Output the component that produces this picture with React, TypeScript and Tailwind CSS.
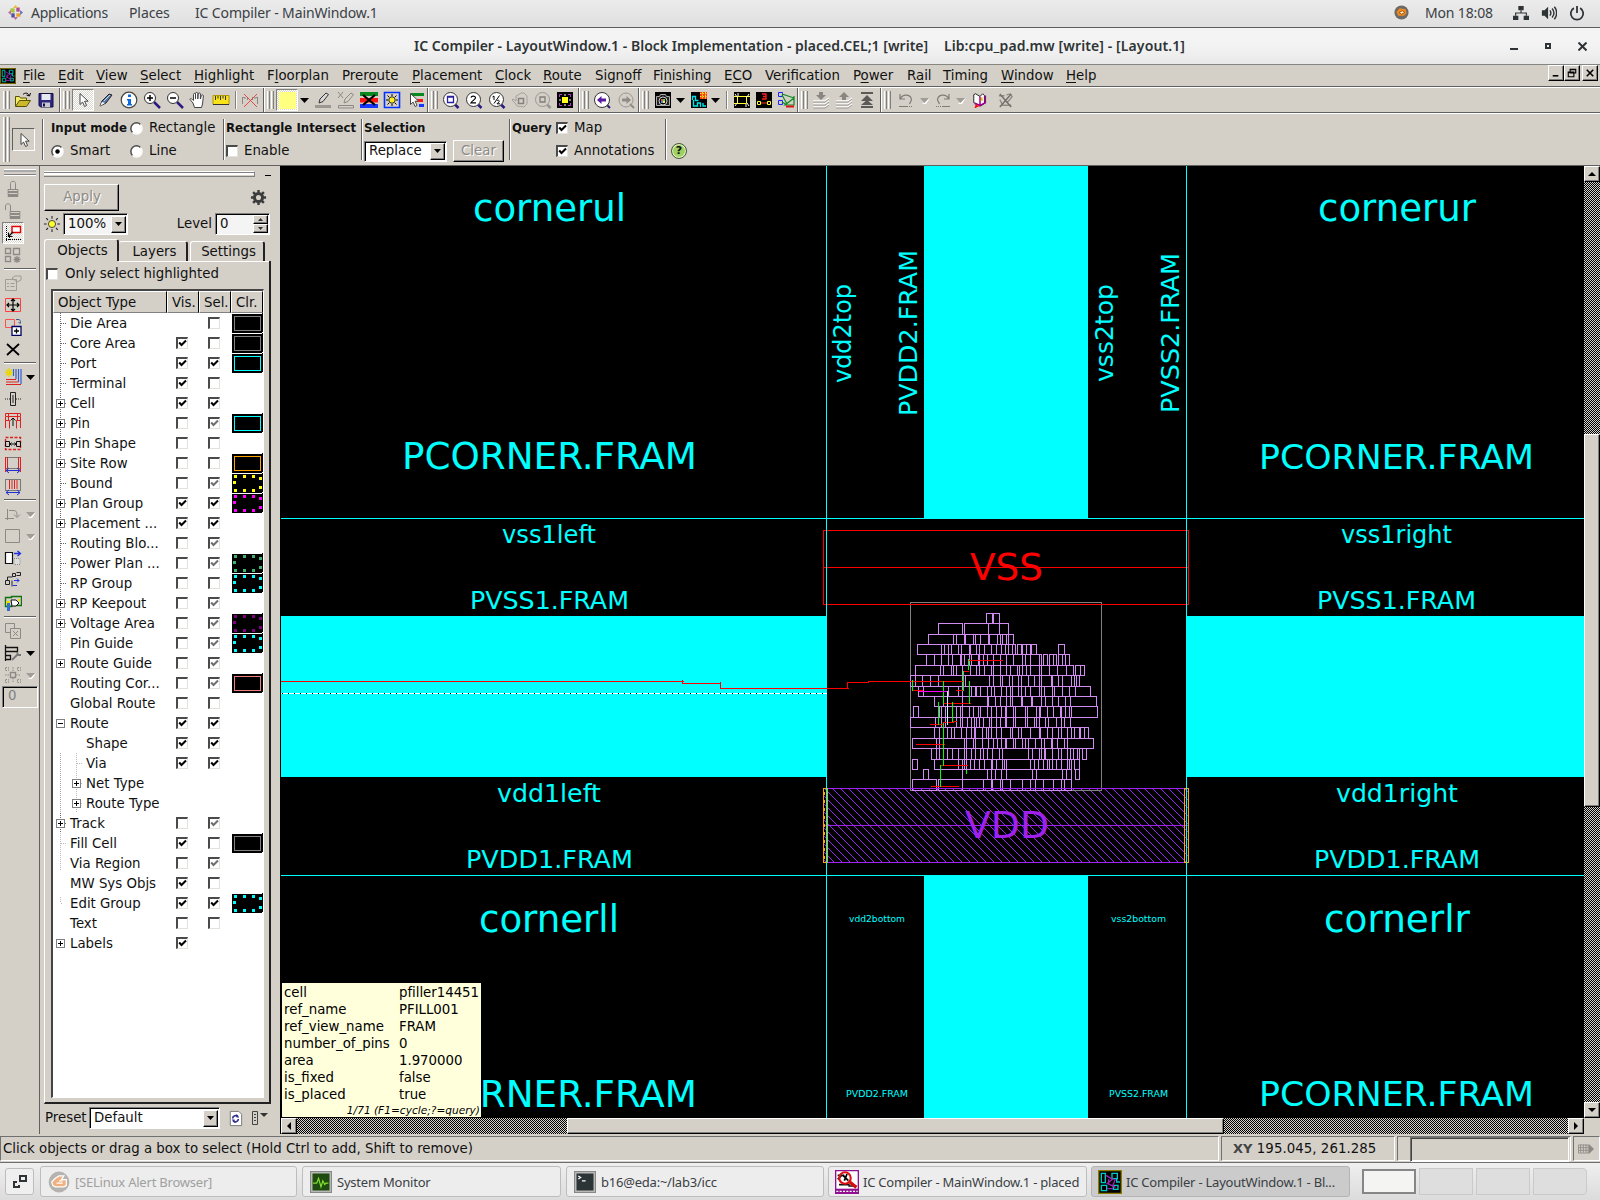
import React from "react";

const DEJAVU = "font-['DejaVu_Sans',sans-serif]";
const NOTO = "font-['Noto_Sans',sans-serif]";
const RAISED = "border border-t-white border-l-white border-r-black border-b-black shadow-[inset_-1px_-1px_0_#808080]";
const SUNKEN = "border border-t-[#808080] border-l-[#808080] border-r-white border-b-white shadow-[inset_1px_1px_0_#000]";
const STIPPLE = "bg-[repeating-conic-gradient(#000_0_25%,#d4d0c8_0_50%)] bg-[length:2px_2px]";
const PRESSED =
  "border border-t-[#808080] border-l-[#808080] border-r-white border-b-white bg-[repeating-conic-gradient(#fff_0_25%,#d9d6cf_0_50%)] bg-[length:2px_2px]";

type Kids = { children?: React.ReactNode };

function Icon({ children, size = 18 }: Kids & { size?: number }) {
  return (
    <svg width={size} height={size} viewBox="0 0 18 18" fill="none" className="shrink-0">
      {children}
    </svg>
  );
}

/* ---------- shared icon drawings ---------- */

const Cursor = () => (
  <Icon>
    <path d="M6 2.5v11l2.6-2.4 2 4.4 2-1-2-4.3h3.6z" fill="#fff" stroke="#444" />
  </Icon>
);
const LayoutLogo = ({ size }: { size: number }) => (
  <Icon size={size}>
    <path d="M0 0h18v18H0z" fill="#000" />
    <path d="M.5.5h17v17H.5z" stroke="#8a7a00" />
    <path d="M2.500 2.500h3v7h-3zM10.500 2.500h4v4h-4zM2.500 11.500h4v4h-4zM11.500 11.500h3.500v3h-3.500zM14 6v3h2.500" stroke="#00c8c8" />
    <path d="M6 4l5 3-4 3 6 3M7 14h4M13 7l-2 5M8 7v4" stroke="#a020b0" />
  </Icon>
);
const Lens = ({ kids, gray }: { kids: React.ReactNode; gray?: boolean }) => (
  <Icon>
    <path d="M12.500 13l4 4" stroke={gray ? "#9a9792" : "#2b1a80"} strokeWidth="2.500" />
    <circle cx="8.500" cy="8.500" r="7" fill={gray ? "#d4d0c8" : "#fff"} stroke={gray ? "#9a9792" : "#333"} />
    {kids}
  </Icon>
);
const Zoom = ({ plus }: { plus?: boolean }) => (
  <Icon>
    <path d="M11 11l6 6" stroke="#2b1a80" strokeWidth="2.500" />
    <circle cx="7" cy="7" r="5.500" fill="#fff" stroke="#333" />
    <path d={plus ? "M4 7h6M7 4v6" : "M4 7h6"} stroke="#000" strokeWidth="1.500" />
  </Icon>
);
const Caret = ({ gray }: { gray?: boolean }) => (
  <svg width="10" height="7" viewBox="0 0 10 7" className="shrink-0">
    {gray && <path d="M2 7L10 1L6 7z" fill="#fff" />}
    <path d="M0 1h9L4.500 6z" fill={gray ? "#a09d97" : "#000"} />
  </svg>
);
const SunIcon = () => (
  <Icon size={16}>
    <path d="M9 0v3M9 15v3M0 9h3M15 9h3M2.500 2.500l2 2M13.500 13.500l2 2M2.500 15.500l2-2M13.500 4.500l2-2" stroke="#222" strokeWidth="1.200" />
    <circle cx="9" cy="9" r="4" fill="#ffff30" stroke="#333" />
  </Icon>
);

/* ---------- top toolbar ---------- */

function Handle() {
  return (
    <div className="ml-[3px] flex h-[18px] gap-[1px]">
      <i className="w-[3px] border-l border-r border-l-white border-r-[#808080]" />
      <i className="w-[3px] border-l border-r border-l-white border-r-[#808080]" />
    </div>
  );
}

function Group({ w, children, last }: Kids & { w: string; last?: boolean }) {
  return (
    <div className={`flex h-[24px] shrink-0 items-center ${last ? "" : "border-r border-r-[#606060] shadow-[1px_0_0_#fff]"} ${w}`}>
      <div className="w-[11px] shrink-0"><Handle /></div>
      {children}
    </div>
  );
}

const Cell = ({ children, w = "w-[23px]" }: Kids & { w?: string }) => (
  <div className={`flex h-[22px] shrink-0 items-center justify-center ${w}`}>{children}</div>
);
const Rule = () => <div className="h-[18px] w-[2px] shrink-0 border-l border-r border-l-[#808080] border-r-white" />;

function Toolbar() {
  return (
    <div className="flex h-[24px] items-center">
      <Group w="w-[60px]">
        <Cell>
          <Icon>
            <path d="M1.500 15V5.500h4l1 1.500h6v2" fill="#f5e96a" stroke="#555500" />
            <path d="M1.500 15.500l4-6h11l-4 6z" fill="#cbb82c" stroke="#555500" />
            <path d="M9 3.500c2-2 5-2 6 1M16.500 2l-1 3-3-1" stroke="#000" />
          </Icon>
        </Cell>
        <Cell>
          <Icon>
            <path d="M2 2.500h14v13.500H3.500L2 14.500z" fill="#2f2a80" stroke="#111040" />
            <path d="M4.500 3h9v6h-9z" fill="#e8e8f0" />
            <path d="M5 11.500h8V16H5z" fill="#c9c9d6" />
            <path d="M6 12.500h2v3H6z" fill="#111040" />
          </Icon>
        </Cell>
      </Group>
      <Group w="w-[204px]">
        <Cell><div className={`flex h-[22px] w-[22px] items-center justify-center ${PRESSED}`}><Cursor /></div></Cell>
        <Cell>
          <Icon>
            <path d="M3 15l2-5 7-7 3 1-6 8z" fill="#5c79a8" stroke="#222" />
            <path d="M3 15l2-4 3 1z" fill="#fff" />
            <path d="M7 10l6-6" stroke="#b9cdf0" />
          </Icon>
        </Cell>
        <Cell>
          <Icon>
            <circle cx="9" cy="9" r="7.800" fill="#fff" stroke="#444" strokeWidth="1.200" />
            <path d="M8 3.500h3V6H8zM7 8h4v5h1v1.500H7V13h1V9.500H7z" fill="#0a6adf" />
          </Icon>
        </Cell>
        <Cell><Zoom plus /></Cell>
        <Cell><Zoom /></Cell>
        <Cell>
          <Icon>
            <path d="M5.500 16.500L4 12 1 8.500c0-1.500 2-1 3.500 1V3.500c0-1.500 2-1.500 2 0V8 2.500c0-1.500 2.300-1.500 2.300 0V8l.4-5c0-1.500 2.200-1.500 2.200 0V8l1-3.500c.4-1.200 2-.8 2 .5L13.500 13l-1 3.500z" fill="#fff" stroke="#444" />
          </Icon>
        </Cell>
        <Cell>
          <Icon>
            <path d="M1 4.500h16v9H1z" fill="#f7e21c" stroke="#b09800" />
            <path d="M3.500 5v4M6 5v2.500M8.500 5v4M11 5v2.500M13.500 5v4M1 13.500h16" stroke="#333" />
          </Icon>
        </Cell>
        <Cell w="w-[7px]"><Rule /></Cell>
        <Cell w="w-[21px]">
          <Icon>
            <path d="M1.500 6v7M4 6v2M6.500 6v3M11.500 6v3M14 6v2M16.500 6v7M1.500 6.500h2M14.500 6.500h2" stroke="#8c8984" />
            <path d="M3 3l13 13M16 3L3 16" stroke="#e63a3a" strokeWidth=".9" />
          </Icon>
        </Cell>
      </Group>
      <Group w="w-[164px]">
        <Cell w="w-[24px]">
          <div className={`flex h-[22px] w-[22px] items-center justify-center ${PRESSED}`}><div className="h-[17px] w-[17px] bg-[#ffff80]" /></div>
        </Cell>
        <Cell w="w-[12px]"><Caret /></Cell>
        <Cell>
          <Icon>
            <path d="M1 14h16v3H1z" fill="#9b9893" />
            <path d="M5 12l1-4 6-6 2.500 1.500-5.500 7z" fill="#d9d9d9" stroke="#333" />
          </Icon>
        </Cell>
        <Cell>
          <Icon>
            <path d="M1.500 14.500h15v2.500h-15z" stroke="#8d8a85" />
            <path d="M7 12l1-4 6-6 2.500 1.500-5.500 7zM1 1l5 6M6 1L1 7" stroke="#8d8a85" />
          </Icon>
        </Cell>
        <Cell>
          <Icon>
            <path d="M0 1h18v4H0z" fill="#0a8a1e" />
            <path d="M0 7h18v4.500H0z" fill="#ff1414" />
            <path d="M0 13h18v4H0z" fill="#1436ff" />
            <path d="M3 4l12 10M15 4L3 14" stroke="#000" strokeWidth="2.200" />
          </Icon>
        </Cell>
        <Cell>
          <Icon>
            <path d="M1.500 1.500h15v15h-15z" stroke="#0030ff" strokeWidth="1.600" />
            <path d="M9 3v2M9 13v2M3 9h2M13 9h2M4.500 4.500l1.500 1.500M12 12l1.500 1.500M4.500 13.500L6 12M12 6l1.500-1.500" stroke="#000" />
            <circle cx="9" cy="9" r="3.200" fill="#ffee20" stroke="#222" />
          </Icon>
        </Cell>
        <Cell w="w-[26px]">
          <Icon>
            <path d="M4 2h13v3H4z" fill="#0a8a1e" />
            <path d="M9 8h7v3H9z" fill="#ff1414" />
            <path d="M12 13h5v3h-5z" fill="#1436ff" />
            <path d="M3.500 2.500v11l2.600-2.400 2 4.400 2-1-2-4.300h3.600z" fill="#fff" stroke="#444" />
          </Icon>
        </Cell>
      </Group>
      <Group w="w-[151px]">
        <Cell><Lens kids={<path d="M5.500 5.500h6v6h-6zM5.500 6h6" stroke="#2a20a0" strokeWidth="1.300" />} /></Cell>
        <Cell><Lens kids={<path d="M6 6.500c.5-2 4.500-2 4.500.3 0 1.700-3 2.500-4.500 5h5" stroke="#000" strokeWidth="1.200" />} /></Cell>
        <Cell><Lens kids={<path d="M4.500 6l1.500-1v4M6 12.500l5.500-8M9 10c1-1.500 3-.5 2 .8l-2 2h3" stroke="#000" />} /></Cell>
        <Cell>
          <Icon>
            <path d="M6 15l-2-3-3-3 1-1 3 2V5l2-1 3-2h3l3 3v8l-3 3z" stroke="#a5a29c" />
            <path d="M7.500 7.500h5v5h-5z" stroke="#85827c" strokeWidth="1.500" />
          </Icon>
        </Cell>
        <Cell><Lens gray kids={<path d="M6 6h5v5H6z" stroke="#807d78" strokeWidth="1.300" />} /></Cell>
        <Cell w="w-[22px]">
          <Icon>
            <path d="M1 1h16v16H1z" fill="#000" />
            <path d="M3.500 6V3.500H6M12 3.500h2.500V6M14.500 12v2.500H12M6 14.500H3.500V12" stroke="#b040d0" />
            <path d="M6 6h6v6H6z" fill="#ffff20" />
            <path d="M9 3v2M9 13v2M3 9h2M13 9h2" stroke="#fff" />
          </Icon>
        </Cell>
      </Group>
      <Group w="w-[60px]">
        <Cell w="w-[24px]">
          <Icon>
            <path d="M13 13l4 4" stroke="#2b1a80" strokeWidth="2" />
            <circle cx="9" cy="9" r="7.500" fill="#fff" stroke="#333" />
            <path d="M4 9l4.500-4v2.500H13v3H8.500V13z" fill="#5a1aa0" />
          </Icon>
        </Cell>
        <Cell>
          <Icon>
            <path d="M13 13l4 4" stroke="#8f8c87" strokeWidth="2" />
            <circle cx="9" cy="9" r="7" stroke="#9a9792" />
            <path d="M14 9L9.500 5v2.500H5v3h4.500V13z" fill="#8f8c87" />
          </Icon>
        </Cell>
      </Group>
      <Group w="w-[159px]">
        <Cell w="w-[25px]">
          <Icon>
            <path d="M1 1h16v16H1z" fill="#000" />
            <path d="M2.500 5.500h3l1-2h5l1 2h3v9h-13z" fill="#222" stroke="#aaa" />
            <circle cx="9" cy="10" r="4" fill="#000" stroke="#ccc" />
            <path d="M7 8h2v2H7z" fill="#f44" /><path d="M9 8h2v2H9z" fill="#4d4" /><path d="M7 10h2v2H7z" fill="#48f" /><path d="M9 10h2v2H9z" fill="#fe3" />
          </Icon>
        </Cell>
        <Cell w="w-[12px]"><Caret /></Cell>
        <Cell>
          <Icon>
            <path d="M1 1h16v16H1z" fill="#000" />
            <path d="M2.500 9V5.500h3v4h3M3.500 9v6h4v-3h3v4M13 12v3h3" stroke="#00e5e5" strokeWidth="1.400" />
            <path d="M10 1h7v7h-7z" fill="#ff3a10" />
            <path d="M10 2.500h7M10 5.500h7M12.500 1v7M15.500 1v7" stroke="#ffe020" strokeDasharray="1.500 1" />
          </Icon>
        </Cell>
        <Cell w="w-[12px]"><Caret /></Cell>
        <Cell w="w-[9px]"><Rule /></Cell>
        <Cell w="w-[21px]">
          <Icon>
            <path d="M1 1h16v16H1z" fill="#000" />
            <path d="M4.500 5.500h9v7h-9zM1 5.500h16M1 12.500h4" stroke="#ffff30" />
            <path d="M4 6L2 3M14 6l2-3M4 12l-2 3M14 12l2 3M5 2v3M13 13v3" stroke="#fff" />
          </Icon>
        </Cell>
        <Cell>
          <Icon>
            <path d="M1 1h16v16H1z" fill="#000" />
            <path d="M7 3h4v2.500H8M11 5.500V8H7" stroke="#ff2020" strokeWidth="1.300" />
            <path d="M2.500 10.500h3v3h-3zM12.500 10.500h3v3h-3z" stroke="#ffff30" />
            <path d="M6 12h6" stroke="#f33" />
          </Icon>
        </Cell>
        <Cell w="w-[22px]">
          <Icon>
            <path d="M1.500 1.500h4v4h-4zM1.500 9.500h4v4h-4z" stroke="#2020ff" />
            <path d="M5 3l12 4M5 11l5 3M17 5v9H8l9-7M5 4l5 9" stroke="#0a8a1e" strokeWidth="1.200" />
            <path d="M9 15.500h8" stroke="#e01010" strokeWidth="2" />
          </Icon>
        </Cell>
      </Group>
      <Group w="w-[83px]">
        {["M9 9l-5-5h3V1h4v3h3z", "M9 1l5 5h-3v3H7V6H4z"].map((d) => (
          <Cell key={d}>
            <Icon>
              <path d="M1 10h12l4-3M1 13h12l4-3M1 16h12l4-3" stroke="#fff" strokeWidth="1.500" />
              <path d="M1 11h12l4-3M1 14h12l4-3M1 17h12l4-3" stroke="#9a9792" />
              <path d={d} fill="#8a8782" />
            </Icon>
          </Cell>
        ))}
        <Cell><Icon><path d="M3 1h12v2H3zM9 4l6 6H3zM9 9l6 5H3zM3 15h12v2H3z" fill="#5c5a56" /></Icon></Cell>
      </Group>
      <Group w="w-[150px]" last>
        <Cell w="w-[27px]">
          <Icon>
            <path d="M3 3v5h5M3.500 7.500C6 2.500 14 3 14.500 9l-2 4M2 15.500h9" stroke="#7f7c77" strokeWidth="1.200" />
            <path d="M12 15.500h4" stroke="#7f7c77" strokeDasharray="1 1" />
          </Icon>
        </Cell>
        <Cell w="w-[11px]"><Caret gray /></Cell>
        <Cell w="w-[25px]">
          <Icon>
            <path d="M15 3v5h-5M14.500 7.500C12 2.500 4 3 3.500 9l2 4M8 15.500h8" stroke="#7f7c77" strokeWidth="1.200" />
            <path d="M2 15.500h5" stroke="#7f7c77" strokeDasharray="1 1" />
          </Icon>
        </Cell>
        <Cell w="w-[12px]"><Caret gray /></Cell>
        <Cell w="w-[26px]">
          <Icon size={16}>
            <path d="M9 5L4 2 2 3v9l3 1 4 3 5-3V4l-2-2z" fill="#fff" stroke="#111" />
            <path d="M9 5v10M3 13l6 2 6-3V4" stroke="#a00090" strokeWidth="1.700" />
            <path d="M8 15l-4 2 1-3" stroke="#f00" strokeWidth="1.500" />
            <path d="M11 6v4" stroke="#e0c000" strokeWidth="2" />
          </Icon>
        </Cell>
        <Cell w="w-[24px]">
          <Icon size={17}>
            <path d="M2 4h6M10 3l4-1 2 3-5 6-3-2M3 8l3 6h9" stroke="#8d8a85" strokeWidth="1.400" />
            <path d="M3 2l12 14M15 2L3 16" stroke="#75726d" strokeWidth="1.600" />
          </Icon>
        </Cell>
      </Group>
    </div>
  );
}

/* ---------- menu bar ---------- */

const MENUS: [string, string, string, string][] = [
  ["", "F", "ile", "w-[35px]"], ["", "E", "dit", "w-[38px]"], ["", "V", "iew", "w-[44px]"], ["", "S", "elect", "w-[54px]"],
  ["", "H", "ighlight", "w-[73px]"], ["F", "l", "oorplan", "w-[75px]"], ["Prer", "o", "ute", "w-[70px]"], ["", "P", "lacement", "w-[83px]"],
  ["", "C", "lock", "w-[48px]"], ["", "R", "oute", "w-[52px]"], ["Sign", "o", "ff", "w-[58px]"], ["Fi", "n", "ishing", "w-[71px]"],
  ["E", "C", "O", "w-[41px]"], ["Ver", "i", "fication", "w-[88px]"], ["P", "o", "wer", "w-[54px]"], ["R", "a", "il", "w-[36px]"],
  ["", "T", "iming", "w-[58px]"], ["", "W", "indow", "w-[65px]"], ["", "H", "elp", "w-[40px]"],
];

function MenuBar() {
  return (
    <div className="flex h-[21px] items-start bg-[#d4d0c8]">
      <div className="mt-[3px] w-[23px]"><LayoutLogo size={16} /></div>
      {MENUS.map(([a, b, c, w]) => (
        <div key={a + b + c} className={`pt-[3px] leading-[16px] whitespace-nowrap ${w}`}>
          {a}<span className="underline decoration-1 underline-offset-[2px]">{b}</span>{c}
        </div>
      ))}
      <div className="ml-auto flex pr-[2px]">
        {["M4 10.500h6", "M5.500 3.500h6v4h-6zM5.500 4h6M3.500 6.500h6v5h-6zM3.500 7h6", "M4 4l7 7M11 4l-7 7"].map((d, i) => (
          <div key={d} className={`h-[16px] w-[16px] bg-[#d4d0c8] ${RAISED} ${i === 2 ? "ml-[2px]" : ""}`}>
            <svg width="14" height="14" viewBox="0 0 15 15" fill={i === 1 ? "#d4d0c8" : "none"}><path d={d} stroke="#000" strokeWidth={i === 1 ? 1.2 : 1.7} /></svg>
          </div>
        ))}
      </div>
    </div>
  );
}

/* ---------- form controls ---------- */

const Radio = ({ on }: { on?: boolean }) => (
  <svg width="13" height="13" viewBox="0 0 13 13" className="shrink-0">
    <circle cx="6.500" cy="6.500" r="5" fill="#fff" />
    <path d="M2.500 10.500A5.600 5.600 0 0 1 10.500 2.500" stroke="#505050" strokeWidth="1.500" fill="none" />
    <path d="M2.500 10.500A5.600 5.600 0 0 0 10.500 2.500" stroke="#fff" strokeWidth="1.200" fill="none" />
    {on && <circle cx="6.500" cy="6.500" r="2.200" fill="#000" />}
  </svg>
);

function Check({ state = 0 }: { state?: number }) {
  return (
    <div className="h-[12px] w-[12px] shrink-0 border-t-2 border-l-2 border-r border-b border-t-[#4a4a4a] border-l-[#4a4a4a] border-r-[#e4e2dc] border-b-[#e4e2dc] bg-white">
      {state > 0 && (
        <svg width="9" height="9" viewBox="0 0 9 9">
          <path d="M1.200 3.500L3.500 6L8 1.500" stroke={state === 1 ? "#000" : "#707070"} strokeWidth="2.100" fill="none" />
        </svg>
      )}
    </div>
  );
}

function Combo({ text, size, gray }: { text: string; size: string; gray?: boolean }) {
  return (
    <div className={`flex shrink-0 items-center ${gray ? "bg-[#f4f4f4]" : "bg-white"} ${SUNKEN} ${size}`}>
      <span className="flex-1 pl-[4px] leading-[16px]">{text}</span>
      <div className={`mr-px flex h-[17px] w-[15px] items-center justify-center bg-[#d4d0c8] ${RAISED}`}>
        <svg width="7" height="4" viewBox="0 0 7 4"><path d="M0 0h7L3.500 4z" /></svg>
      </div>
    </div>
  );
}

const BOLD = "text-[11.75px] font-bold leading-[16px] whitespace-nowrap";
const Divider = () => <div className="mt-[5px] h-[41px] w-[2px] shrink-0 border-l border-r border-l-[#606060] border-r-white" />;

function OptionsBar() {
  return (
    <div className="flex h-[51px] items-start leading-[16px]">
      <div className="mt-[3px] ml-[3px] flex h-[45px] w-[9px] gap-[1px]">
        <i className="w-[3px] border-l border-r border-l-white border-r-[#808080]" />
        <i className="w-[3px] border-l border-r border-l-white border-r-[#808080]" />
      </div>
      <div className="mt-[14px] flex h-[23px] w-[23px] items-center justify-center border border-t-[#606060] border-l-[#606060] border-r-white border-b-white"><Cursor /></div>
      <div className="ml-[7px]"><Divider /></div>
      <div className="mt-[6px] ml-[7px] grid w-[172px] grid-cols-[79px_93px] grid-rows-[16px_16px] gap-y-[7px]">
        <span className={BOLD}>Input mode</span>
        <span className="flex items-center gap-[6px]"><Radio />Rectangle</span>
        <span className="flex items-center gap-[6px]"><Radio on />Smart</span>
        <span className="flex items-center gap-[6px]"><Radio />Line</span>
      </div>
      <Divider />
      <div className="mt-[6px] ml-[1px] grid w-[135px] grid-rows-[16px_16px] gap-y-[7px]">
        <span className={BOLD}>Rectangle Intersect</span>
        <span className="flex items-center gap-[6px]"><Check />Enable</span>
      </div>
      <Divider />
      <div className="mt-[6px] ml-[1px] w-[145px]">
        <div className={BOLD}>Selection</div>
        <div className="mt-[4px] flex items-center gap-[6px]">
          <Combo text="Replace" size="h-[21px] w-[83px]" />
          <div className={`flex h-[22px] w-[51px] items-center justify-center text-[#8d8a85] [text-shadow:1px_1px_0_#fff] ${RAISED}`}>Clear</div>
        </div>
      </div>
      <Divider />
      <div className="mt-[6px] grid w-[154px] grid-cols-[45px_109px] grid-rows-[16px_16px] gap-y-[7px]">
        <span className={`pl-px ${BOLD}`}>Query</span>
        <span className="flex items-center gap-[6px]"><Check state={1} />Map</span>
        <span />
        <span className="flex items-center gap-[6px] tracking-[0.05px]"><Check state={1} />Annotations</span>
      </div>
      <Divider />
      <div className="mt-[29px] ml-[4px] flex h-[16px] w-[16px] items-center justify-center rounded-full border border-[#4a5a30] bg-[#9ed062] text-[11px] font-bold shadow-[inset_0_0_0_1px_#e8f5d8]">?</div>
    </div>
  );
}

/* ---------- vertical edit toolbar ---------- */

const SideCell = ({ children, caret, h = "h-[22px]" }: Kids & { caret?: string; h?: string }) => (
  <div className={`flex items-center pl-[4px] ${h}`}>
    {children}
    {caret && <div className="ml-[4px]"><Caret gray={caret === "gray"} /></div>}
  </div>
);
const SideRule = () => <div className="my-[2px] ml-[4px] h-[2px] w-[32px] border-t border-b border-t-[#606060] border-b-white" />;

function SideTools() {
  const g = "#8d8a85";
  return (
    <div className="w-[40px] shrink-0 border-r border-r-[#606060] pt-[3px]">
      <div className="mb-[2px] ml-[4px] h-[7px] w-[32px] border-t border-b border-white shadow-[inset_0_-1px_0_#808080,inset_0_2px_0_#aaa]" />
      <SideCell><Icon><path d="M4 9.500h10v2H4zM4 12.500h10v2H4zM4 15.500h10v1H4zM6.500 9V3.500c0-3 5-3 5 0V9" stroke={g} /></Icon></SideCell>
      <SideCell><Icon><path d="M6 9.500h10v2H6zM6 12.500h10v2H6zM6 15.500h10v1H6zM1.500 8V4c0-3 5-3 5 0v5" stroke={g} /></Icon></SideCell>
      <div className="flex h-[22px] items-center pl-[2px]">
        <div className={`flex h-[22px] w-[22px] items-center justify-center ${PRESSED}`}>
          <Icon>
            <path d="M8 2.500h8.500v6H8z" fill="#fff" stroke="#e00000" strokeWidth="1.400" />
            <path d="M2.500 2v15M5.500 13v4M2 15.500h15" stroke="#000" strokeDasharray="1 1" />
            <path d="M9 8l-4 4M4.500 8.500v4h4" stroke="#000" strokeWidth="1.200" />
          </Icon>
        </div>
      </div>
      <SideCell><Icon><path d="M1.500 2.500h5v5h-5zM1.500 10.500h5v5h-5zM9.500 2.500h6v6h-6zM13 10v7M9.500 13.500h7M10.500 11l5 5M15.500 11l-5 5" stroke={g} strokeWidth="1.300" /></Icon></SideCell>
      <SideRule />
      <SideCell><Icon><path d="M1.500 5.500h11v11h-11zM3 9.500h2M3 12.500h2M6.500 9.500h4M6.500 12.500h4M8 4l3-2h6v4l-4 2z" stroke="#a09d97" /></Icon></SideCell>
      <SideCell>
        <Icon>
          <path d="M1.500 2.500h15v13h-15z" stroke="#ff4040" />
          <path d="M9 3v12M3 9h12M7 5l2-2 2 2M7 13l2 2 2-2M5 7L3 9l2 2M13 7l2 2-2 2" stroke="#000" strokeWidth="1.200" />
        </Icon>
      </SideCell>
      <SideCell>
        <Icon>
          <path d="M1.500 1.500h9v8h-9z" stroke="#ff5050" />
          <path d="M12 1.500h3c1 0 1.500 2 1.500 3.500M14.500 4l2 2" stroke="#3a5a90" />
          <path d="M8 8.500h9v9H8z" fill="#fff" stroke="#000060" strokeWidth="1.300" /><path d="M12.500 10.500v5M10 13h5" stroke="#000" strokeWidth="1.300" />
        </Icon>
      </SideCell>
      <SideCell><Icon><path d="M3 4l12 11M15 4L3 15" stroke="#000" strokeWidth="1.800" /></Icon></SideCell>
      <SideRule />
      <SideCell caret="black">
        <Icon>
          <path d="M17 1v15M14.500 1v13M12 1v10M9.500 1v7" stroke="#3060d0" strokeWidth="1.200" />
          <path d="M2 16.500h15M2 14h12.500M2 11.500h10" stroke="#e02020" strokeWidth="1.200" />
          <path d="M5 0v9M1 4.500h8M2 1.500l6 6M8 1.500l-6 6" stroke="#e8d800" strokeWidth="1.300" />
        </Icon>
      </SideCell>
      <SideCell><Icon><path d="M6.500 2.500h5v13h-5zM9 5v8" stroke="#222" /><path d="M1 9h5M12 9h5" stroke="#222" strokeDasharray="1 1" /></Icon></SideCell>
      <SideCell>
        <Icon>
          <path d="M1.500 1.500h15v3h-15zM4.500 1.500V8M13.500 1.500V8M1.500 8.500h4v8M16.500 8.500h-4v8M1.500 5v11M16.500 5v11" stroke="#e02020" />
          <path d="M9 14V6M6.500 8.500L9 6l2.500 2.500" stroke="#111" />
        </Icon>
      </SideCell>
      <SideCell>
        <Icon><path d="M1.500 3.500h15v12h-15z" stroke="#e02020" strokeWidth="1.400" strokeDasharray="3 1.500" /><path d="M1.500 7.500h4v5h-4zM12.500 7.500h4v5h-4zM6 10h6M7.500 8.500L6 10l1.500 1.500M10.500 8.500L12 10l-1.500 1.500" stroke="#111" /></Icon>
      </SideCell>
      {["M1.500 1v15M3.500 1v15M14.500 1v15M16.500 1v15", "M5.500 2v9M8 2v9M10.500 2v9M13 2v9"].map((d) => (
        <SideCell key={d}>
          <Icon><path d="M1.500 1.500h15v11h-15z" stroke="#222" strokeDasharray="1 1" /><path d={d} stroke="#e02020" /><path d="M2 14.500h14M5 12l-3 2.500L5 17M13 12l3 2.500-3 2.500" stroke="#2030d0" /></Icon>
        </SideCell>
      ))}
      <div className="-mt-px"><SideRule /></div>
      <SideCell caret="gray"><Icon><path d="M3.500 4v11M1 13.500h9M5 5.500h4c4 0 4 2 4 6M10 9.500l3 3 3-3" stroke={g} /></Icon></SideCell>
      <SideCell caret="gray"><Icon><path d="M1.500 2.500h14v13h-14z" stroke={g} /></Icon></SideCell>
      <SideCell>
        <Icon><path d="M1.500 3.500h7v11h-7z" fill="#fff" stroke="#111" strokeWidth="1.200" /><path d="M10 9.500h6v6h-6z" fill="#ddd" stroke="#888" strokeDasharray="1 1" /><path d="M10 4.500h6M13.500 2l3 2.500-3 2.500" stroke="#2030e0" strokeWidth="1.300" /></Icon>
      </SideCell>
      <SideCell>
        <Icon><path d="M1.500 9.500h4v4h-4zM8.500 2.500h3v3h-3zM12.500 4.500h4v-3h-4M3.500 9V6h5M8 9.500v6" stroke="#222" /><path d="M10 9.500h5M13 7.500l2 2-2 2M9 14.500h4" stroke="#2030e0" /></Icon>
      </SideCell>
      <SideCell h="h-[23px]">
        <Icon><path d="M1.500 3.500h6v-1h10v9h-10v1h-6z" stroke="#107010" strokeWidth="1.400" /><path d="M7 6h5l3 3-3 3H8z" fill="#fff" stroke="#111" /><path d="M2 7h4v4H2zM14 5h2v2h-2z" fill="#e8e000" /><path d="M4.500 9v8" stroke="#3070d0" strokeWidth="3" /></Icon>
      </SideCell>
      <SideRule />
      <SideCell><Icon><path d="M1.500 1.500h9v9h-9z" stroke={g} /><path d="M6.500 6.500h10v10h-10zM9 9l5 5M14 9l-5 5" stroke={g} fill="#d4d0c8" /></Icon></SideCell>
      <SideCell caret="black">
        <Icon><path d="M1.500 1v16M1.500 3.500h12v4h-12M1.500 11.500h5v4h-5" stroke="#111" strokeWidth="1.300" /><path d="M8 16l6-6M13 8l1 3 3 0" stroke="#777" strokeWidth="1.800" /></Icon>
      </SideCell>
      <SideCell caret="gray">
        <Icon><path d="M6.500 6.500h5v5h-5z" stroke={g} strokeWidth="1.400" /><path d="M1.500 1.500h3v3h-3zM13.500 1.500h3v3h-3zM1.500 13.500h3v3h-3zM13.500 13.500h3v3h-3zM9 1v5M9 12v5M1 9h5M12 9h5" stroke={g} strokeDasharray="1.500 1" /></Icon>
      </SideCell>
      <div className={`ml-[2px] h-[22px] w-[36px] pt-px pl-[5px] text-[#808080] ${SUNKEN}`}>0</div>
    </div>
  );
}

/* ---------- object panel ---------- */

/* name, tree glyph (+ - or line or none), vis, sel, swatch; -1 leaves the box out, 2 is a grey check */
type Row = [string, string, number, number, string?];
const ROWS: Row[] = [
  ["Die Area", "l", -1, 0, "#808080"], ["Core Area", "l", 1, 0, "#808080"], ["Port", "l", 1, 1, "#00ffff"], ["Terminal", "l", 1, 0],
  ["Cell", "+", 1, 1], ["Pin", "+", 0, 2, "#00ffff"], ["Pin Shape", "+", 0, 0], ["Site Row", "+", 0, 0, "#ffa500"],
  ["Bound", "l", 0, 2, "d#ffff00"], ["Plan Group", "+", 1, 1, "d#ff00ff"], ["Placement ...", "+", 1, 1], ["Routing Blo...", "l", 0, 2],
  ["Power Plan ...", "l", 0, 2, "d#3cb371"], ["RP Group", "l", 0, 0, "d#00ffff"], ["RP Keepout", "+", 0, 2], ["Voltage Area", "+", 0, 2, "d#800080"],
  ["Pin Guide", "v", 0, 2, "d#00ffff"], ["Route Guide", "b", 0, 2], ["Routing Cor...", "n", 0, 2, "#f08080"], ["Global Route", "n", 0, 0],
  ["Route", "-", 1, 1], [">Shape", "n", 1, 1], [">Via", "L", 1, 1], [">Net Type", "+", -1, -1], [">Route Type", "+", -1, -1],
  ["Track", "+", 0, 2], ["Fill Cell", "f", 1, 0, "#808080"], ["Via Region", "v", 0, 2], ["MW Sys Objs", "n", 1, 0], ["Edit Group", "e", 1, 1, "d#00ffff"],
  ["Text", "n", 0, 0], ["Labels", "b", 1, -1],
];

function Swatch({ color }: { color: string }) {
  const dots = color[0] === "d";
  const c = dots ? color.slice(1) : color;
  return (
    <svg width="31" height="20" viewBox="0 0 31 20" shapeRendering="crispEdges">
      <path d="M0 1h31v18H0z" fill="#000" />
      <path d="M-1 19.500h31M30.500 0v19" stroke="#000" />
      {dots ? (
        <path d="M2 2h3v3H2zM11 2h3v3h-3zM20 2h3v3h-3zM27 4h3v3h-3zM1 8h3v3H1zM27 13h3v3h-3zM2 16h3v3H2zM11 16h3v3h-3zM20 16h3v3h-3z" fill={c} />
      ) : (
        <path d="M2.500 3.500h26v14h-26z" stroke={c} fill="none" />
      )}
    </svg>
  );
}

const STEMS: Record<string, string> = {
  l: "M7.500 0v20M8 10.500h6",
  L: "M7.500 0v20M8 10.500h6",
  f: "M7.500 0v20M8 10.500h6",
  "+": "M7.500 0v20M8 10.500h6",
  v: "M7.500 0v18",
  e: "M7.500 4v6M8 10.500h2",
};

function TreeGlyph({ kind, deep }: { kind: string; deep: boolean }) {
  const box = kind === "+" || kind === "-" || kind === "b";
  return (
    <svg width={deep ? 33 : 17} height="20" viewBox={deep ? "0 0 33 20" : "0 0 17 20"} shapeRendering="crispEdges" className="shrink-0" fill="none">
      {deep && kind !== "n" && <path d="M7.500 0v20" stroke="#aaa" strokeDasharray="1 1" />}
      <g transform={deep ? "translate(16 0)" : undefined}>
        {STEMS[kind] && <path d={STEMS[kind]} stroke={kind === "l" || (kind === "+" && !deep) ? "#666" : "#bbb"} strokeDasharray="1 1" />}
        {box && <path d="M3.500 6.500h8v8h-8z" fill="#fff" stroke="#808080" />}
        {box && <path d={kind === "-" ? "M5 10.500h5" : "M5 10.500h5M7.500 8v5"} stroke="#000" />}
      </g>
    </svg>
  );
}

const HeadCell = ({ children, w }: Kids & { w: string }) => (
  <div className={`h-[22px] border border-t-white border-l-white border-r-black border-b-[#808080] bg-[#d4d0c8] pl-[4px] leading-[22px] ${w}`}>{children}</div>
);

function Spin() {
  return (
    <div className="mr-px flex flex-col">
      {["M0 3h5L2.500 0z", "M0 0h5L2.500 3z"].map((d) => (
        <div key={d} className={`flex h-[9px] w-[15px] items-center justify-center bg-[#d4d0c8] ${RAISED}`}>
          <svg width="5" height="3" viewBox="0 0 5 3"><path d={d} fill="#333" /></svg>
        </div>
      ))}
    </div>
  );
}

function ObjectPanel() {
  return (
    <div className="flex w-[236px] shrink-0 flex-col pt-[4px] pl-[4px]">
      <div className="flex items-start pr-[5px]">
        <div className="mt-[1px] h-[6px] w-[211px] border-t border-b border-r border-t-white border-b-[#808080] border-r-[#808080] shadow-[inset_0_1px_0_#808080,inset_0_3px_0_#fff]" />
        <div className="mt-[5px] ml-auto h-px w-[6px] bg-black" />
      </div>
      <div className="mt-[6px] flex h-[28px] items-center justify-between pr-[9px]">
        <div className={`flex h-[27px] w-[75px] items-center justify-center pl-px text-[#8d8a85] [text-shadow:1px_1px_0_#fff] ${RAISED}`}>Apply</div>
        <Icon size={17}>
          <circle cx="9" cy="9" r="4.300" stroke="#3c3c3c" strokeWidth="3.200" />
          <path d="M9 1v3M9 14v3M1 9h3M14 9h3M3.300 3.300l2.200 2.200M12.500 12.500l2.200 2.200M3.300 14.700l2.200-2.200M12.500 5.500l2.200-2.200" stroke="#3c3c3c" strokeWidth="2.600" />
        </Icon>
      </div>
      <div className="mt-[2px] flex h-[22px] items-center">
        <SunIcon />
        <div className="ml-[3px]"><Combo gray text="100%" size="h-[22px] w-[65px]" /></div>
        <span className="ml-auto">Level</span>
        <div className={`mr-[6px] ml-[3px] flex h-[22px] w-[55px] items-center bg-[#f4f4f4] ${SUNKEN}`}><span className="flex-1 pl-[4px]">0</span><Spin /></div>
      </div>
      <div className="mt-[4px] flex h-[22px] items-end">
        <div className="h-[22px] w-[75px] rounded-t-[3px] border-t border-l border-r-2 border-t-white border-l-white border-r-[#222] pt-[2px] pl-[3px] text-center leading-[18px]">Objects</div>
        <div className="h-[20px] w-[69px] rounded-t-[3px] border-t border-r-2 border-t-white border-r-[#222] pl-[4px] text-center leading-[19px]">Layers</div>
        <div className="ml-[2px] h-[20px] w-[75px] rounded-t-[3px] border-t border-l border-r-2 border-t-white border-l-white border-r-[#222] pl-[3px] text-center leading-[19px]">Settings</div>
      </div>
      <div className="h-[843px] w-[227px] border-l border-r-2 border-b-2 border-l-white border-r-[#222] border-b-[#222]">
        <div className="ml-[74px] h-px bg-white" />
        <div className="mt-[4px] ml-[1px] flex h-[16px] items-center gap-[7px]"><Check />Only select highlighted</div>
        <div className="mt-[7px] ml-[6px] h-[809px] w-[213px] border-t-2 border-l-2 border-r border-b border-t-[#444] border-l-[#444] border-r-white border-b-white bg-white">
          <div className="flex">
            <HeadCell w="w-[114px]">Object Type</HeadCell><HeadCell w="w-[32px]">Vis.</HeadCell><HeadCell w="w-[32px]">Sel.</HeadCell><HeadCell w="w-[32px]">Clr.</HeadCell>
          </div>
          {ROWS.map(([name, glyph, vis, sel, color]) => {
            const deep = name[0] === ">";
            return (
              <div key={name} className="flex h-[20px] items-center">
                <div className="flex w-[123px] items-center whitespace-nowrap"><TreeGlyph kind={glyph} deep={deep} /><span className="leading-[17px]">{deep ? name.slice(1) : name}</span></div>
                <div className="w-[32px]">{vis >= 0 && <Check state={vis} />}</div>
                <div className="w-[24px]">{sel >= 0 && <Check state={sel} />}</div>
                {color && <Swatch color={color} />}
              </div>
            );
          })}
        </div>
      </div>
      <div className="mt-[3px] flex h-[22px] items-center">
        <span className="w-[45px] pl-px">Preset</span>
        <Combo text="Default" size="h-[22px] w-[131px]" />
        <div className="ml-[7px]"><Icon size={17}><path d="M3.500 1.500h9l3 3v12h-12z" fill="#fff" stroke="#777" /><path d="M6 9c0-3 4-4 5.500-2M12 9.500c0 3-4 4-5.500 2" stroke="#303090" strokeWidth="1.800" /><path d="M10 4v4h3zM8 14v-4H5z" fill="#303090" /></Icon></div>
        <div className="ml-[7px]"><Icon size={18}><path d="M1.500 2.500h5v13h-5zM3 5.500h2M3 8.500h2M3 11.500h2" stroke="#444" /><path d="M9 4h8l-4 4z" fill="#333" /></Icon></div>
      </div>
    </div>
  );
}

/* ---------- layout canvas ---------- */

/* Placement rows: [top, bottom, ...runs of cell edges], in thirds of a pixel from (800, 500) */
const CELLS: [number, number, number[][]][] = [
  [340, 370, [[559, 577, 580, 599]]],
  [370, 403, [[415, 488], [493, 565, 599, 626]]],
  [403, 433, [[385, 460, 469, 493, 496, 520, 526, 541, 565, 568, 592, 601, 607, 619, 626, 641]]],
  [433, 463, [[352, 424, 433, 445, 454, 475, 484, 508, 511, 529, 538, 553, 574, 589, 604, 616, 626, 637, 647], [652, 664, 667, 679, 691, 694, 710], [775, 793]]],
  [463, 496, [[379, 403, 424, 445, 457, 481, 484, 493, 508, 514, 535, 538, 550, 562, 580, 601, 619, 640, 667, 676, 691, 718, 724], [730, 742], [748, 760, 770], [775, 787, 796, 808]]],
  [496, 526, [[346, 421, 430, 454, 460, 469, 487, 511, 529, 538, 553, 574, 580, 601, 619, 631, 652, 658, 667, 679, 691, 718, 724, 748, 772, 799, 820], [826, 841, 853]]],
  [526, 559, [[331, 346, 367, 391, 415, 487, 496, 568, 580, 601, 607, 628, 637, 655, 664, 685, 703, 718, 724, 754, 757, 775, 787, 814, 823, 829, 838]]],
  [559, 589, [[355, 370, 445, 475, 487, 514, 526, 529, 541, 562, 574, 583, 604, 619, 631, 637, 655, 664, 676, 691, 718, 724, 733, 757, 763, 787, 808, 826, 872]]],
  [589, 619, [[403, 430, 487, 562, 565, 586, 601, 619, 631, 637, 664, 667, 694, 697, 724, 736, 757, 775, 796, 811, 889]]],
  [619, 652, [[340, 355], [415, 418, 424, 436, 469, 481, 487, 508, 520, 535, 541, 562, 574, 589, 604, 616, 619, 640, 646, 676, 682, 709, 718, 721, 742, 760, 781, 784, 796, 808, 814, 892]]],
  [652, 682, [[331, 406, 424, 436, 469, 481, 487, 502, 514, 523, 529, 538, 550, 568, 574, 589, 601, 616, 619, 640, 646, 676, 682, 703, 709, 718, 736, 745, 769, 784, 793, 811]]],
  [682, 715, [[403, 418, 430, 442, 454, 463, 484, 499, 514, 523, 526, 547, 559, 565, 574, 589, 604, 631, 637, 655, 664, 691, 718, 721, 742, 757, 775, 784, 802, 814, 823, 838, 841, 853, 865]]],
  [715, 745, [[337, 409, 418, 493, 499, 520, 526, 547, 565, 580, 592, 604, 616, 619, 640, 646, 667, 676, 685, 706, 724, 733, 754, 757, 772, 793, 802, 880]]],
  [745, 778, [[394, 409, 418, 442, 457, 475, 493, 499, 514, 526, 541, 550, 562, 577, 598, 607, 685, 697, 718, 724, 733, 736, 757, 775, 784, 802, 811, 820, 832, 838], [847, 859]]],
  [778, 808, [[337, 352], [403, 475, 487, 493, 499, 511, 523, 538, 553, 574, 577, 589, 607, 613, 619, 691, 703, 715, 730, 742, 748, 757, 769, 784, 802, 808, 814], [823, 838]]],
  [808, 838, [[370, 385], [487, 562, 574, 586, 604, 619, 697, 709, 787, 799, 814], [826, 838]]],
  [838, 871, [[337, 409], [415, 487, 550, 574, 577, 601, 607, 631, 667, 691, 706, 730, 760, 784, 793, 814]]],
];
const px = (v: number, o: number) => o + Math.floor(v / 3) + 0.5;
const CELL_PATH = CELLS.map(([t, b, runs]) =>
  runs
    .map((r) => {
      const y0 = px(t, 500), y1 = px(b, 500), x0 = px(r[0], 800), x1 = px(r[r.length - 1], 800);
      return `M${x0} ${y0}H${x1}V${y1}H${x0}Z` + r.slice(1, -1).map((x) => `M${px(x, 800)} ${y0}V${y1}`).join("");
    })
    .join("")
).join("");

/* text, left, baseline, length, font size */
const LABELS: [string, number, number, number, number][] = [
  ["cornerul", 473, 221, 153, 37], ["cornerur", 1318, 221, 158, 37],
  ["PCORNER.FRAM", 402, 469, 295, 37], ["PCORNER.FRAM", 1259, 469, 275, 34.500],
  ["vss1left", 502, 543, 94, 24.5], ["PVSS1.FRAM", 470, 609, 159, 24.5],
  ["vss1right", 1341, 543, 111, 24.5], ["PVSS1.FRAM", 1317, 609, 159, 24.5],
  ["vdd1left", 497, 802, 104, 24.5], ["PVDD1.FRAM", 466, 868, 167, 24.5],
  ["vdd1right", 1336, 802, 122, 24.5], ["PVDD1.FRAM", 1314, 868, 166, 24.5],
  ["cornerll", 479, 932, 140, 37], ["cornerlr", 1324, 932, 146, 37],
  ["PCORNER.FRAM", 402, 1107, 295, 37], ["PCORNER.FRAM", 1259, 1106, 275, 34.500],
  ["vdd2bottom", 849, 922, 56, 9.3], ["vss2bottom", 1111, 922, 55, 9.3],
  ["PVDD2.FRAM", 846, 1097, 62, 9.3], ["PVSS2.FRAM", 1109, 1097, 59, 9.3],
];
const VERTICAL: [string, number, number, number][] = [
  ["vdd2top", 851, 383, 99], ["PVDD2.FRAM", 917, 416, 166], ["vss2top", 1113, 382, 98], ["PVSS2.FRAM", 1179, 413, 160],
];

function Canvas() {
  return (
    <svg width="1303" height="952" viewBox="281 166 1303 952" className="block bg-black" fill="none">
      <defs>
        <pattern id="hatch" x="0" y="0" width="8" height="8" patternUnits="userSpaceOnUse">
          <path d="M4 0h1v1H4zM5 1h1v1H5zM6 2h1v1H6zM7 3h1v1H7zM0 4h1v1H0zM1 5h1v1H1zM2 6h1v1H2zM3 7h1v1H3z" fill="#a020f0" />
        </pattern>
      </defs>
      <g shapeRendering="crispEdges">
        <path d="M924 166h164v352H924zM924 876h164v242H924zM281 616h545v161H281zM1187 616h397v161h-397z" fill="#00ffff" />
        <path d="M824 789h364v74H824z" fill="url(#hatch)" />
        <path d="M910.500 602.500h191v188h-191z" stroke="#808080" />
        <path d={CELL_PATH} stroke="#d08cf0" />
        <path d="M823.500 788.500h365v74h-365zM823.500 825.500h365" stroke="#a020f0" />
        <path d="M823.500 530.500h365v74h-365zM823.500 567.500h365" stroke="#f00" />
        <path d="M823.500 788.500h4v74h-4zM1184.500 788.500h4v74h-4z" stroke="#ffa500" />
        <path d="M824.500 792v68M1186.500 792v68" stroke="#ffa500" strokeDasharray="3 5" />
        <path d="M281 518.500h1303M281 875.500h1303M826.500 166v952M1186.500 166v952" stroke="#00ffff" />
        <path d="M281 693.500h546" stroke="#fff" />
        <path d="M282 693.500h545" stroke="#000" strokeDasharray="1 5" />
        <path
          d="M281 681.500h402.500M682.500 680v3.500h38M720.500 682v6.500h128M847.500 688v-5.500h21v-1h42M909 681.500h54M968 660.500h35M963 671.500h6M912 690.500h11M956 690.500h7M943 703.500h28M930 724.500h13M943 722.500h10v-1h4M916 744.500h29M941 765.500h27M931 786.500h28"
          stroke="#f00"
        />
        <path d="M968.500 659v11M963.500 671v20M912.500 680v11M943.500 681v23M969.500 681v23M938.500 702v23M952.500 702v20M943.500 723v43M940.500 765v22M966.500 770v4" stroke="#0f0" />
        <path d="M919 691.500h28" stroke="#f0f" />
        <path d="M947.500 691v34" stroke="#c8f0ff" />
      </g>
      <g fill="#00ffff" fontFamily="'DejaVu Sans', sans-serif">
        {LABELS.map(([t, x, y, len, s], i) => (
          <text key={i} x={x} y={y} textLength={len} lengthAdjust="spacingAndGlyphs" fontSize={s}>{t}</text>
        ))}
        {VERTICAL.map(([t, x, y, len]) => (
          <text key={t} transform={`translate(${x} ${y}) rotate(-90)`} textLength={len} lengthAdjust="spacingAndGlyphs" fontSize={24.5}>{t}</text>
        ))}
        <text x="970" y="580" textLength="73" lengthAdjust="spacingAndGlyphs" fontSize="37" fill="#f00">VSS</text>
        <text x="965" y="838" textLength="84" lengthAdjust="spacingAndGlyphs" fontSize="37" fill="#a020f0">VDD</text>
      </g>
    </svg>
  );
}

const TIP = [
  ["cell", "pfiller14451"], ["ref_name", "PFILL001"], ["ref_view_name", "FRAM"], ["number_of_pins", "0"],
  ["area", "1.970000"], ["is_fixed", "false"], ["is_placed", "true"],
];

const ScrollButton = ({ d }: { d: string }) => (
  <div className={`flex h-[16px] w-[16px] shrink-0 items-center justify-center bg-[#d4d0c8] ${RAISED}`}>
    <svg width="8" height="8" viewBox="0 0 8 8"><path d={d} /></svg>
  </div>
);

function LayoutView() {
  return (
    <div className="ml-[4px] w-[1320px] border-l border-l-black">
      <div className="flex">
        <div className="relative h-[952px] w-[1303px]">
          <Canvas />
          <div className="absolute bottom-px left-px h-[134px] w-[199px] bg-[#ffffdc] pt-px pl-[2px] text-black">
            {TIP.map(([k, v]) => (
              <div key={k} className="flex h-[17px] leading-[17px]"><span className="w-[115px]">{k}</span><span className="tracking-[-0.03px]">{v}</span></div>
            ))}
            <div className="pr-px text-right text-[10.6px] leading-[14px] whitespace-nowrap italic">1/71 (F1=cycle;?=query)</div>
          </div>
        </div>
        <div className={`flex w-[16px] flex-col ${STIPPLE}`}>
          <ScrollButton d="M0 6h8L4 2z" />
          <div className={`mt-[252px] h-[373px] bg-[#d4d0c8] ${RAISED}`} />
          <div className="mt-auto"><ScrollButton d="M0 2h8L4 6z" /></div>
        </div>
      </div>
      <div className="flex h-[16px]">
        <div className={`flex w-[1303px] ${STIPPLE}`}>
          <ScrollButton d="M6 0v8L2 4z" />
          <div className={`ml-[270px] h-[16px] w-[657px] bg-[#d4d0c8] ${RAISED}`} />
          <div className="ml-auto"><ScrollButton d="M2 0v8l4-4z" /></div>
        </div>
      </div>
    </div>
  );
}

/* ---------- desktop bars ---------- */

function TopBar() {
  return (
    <div className={`flex h-[28px] items-center border-b border-b-[#5c5c58] bg-gradient-to-b from-[#ececec] to-[#dfdfdf] pr-[8px] pb-[2px] text-[14px] text-[#3a4044] ${NOTO}`}>
      <div className="ml-[8px] w-[23px]">
        <Icon size={15}>
          <path d="M3 4h5v5H3z" fill="#a8c838" /><path d="M10 3h4v5h-4z" fill="#b04898" /><path d="M4 10h4v5H4z" fill="#5050a0" /><path d="M10 10h5v4h-5z" fill="#e8a030" />
          <path d="M9 18l-3-3.500h6zM0 9l3.500-3v6z" fill="#c070a8" />
          <path d="M9 0l3 3.500H6z" fill="#f0b840" /><path d="M18 9l-3.500 3V6z" fill="#7070b8" />
        </Icon>
      </div>
      <span className="w-[98px] tracking-[-0.3px]">Applications</span>
      <span className="w-[66px] tracking-[-0.1px]">Places</span>
      <span className="tracking-[-0.13px]">IC Compiler - MainWindow.1</span>
      <div className="ml-auto w-[31px]">
        <Icon size={15}><circle cx="9" cy="9" r="8.500" fill="#6d6a66" /><path d="M3 8l4-4 7 1 1 5-3 3H5z" fill="#f08a1e" /><path d="M6 9l4-2 3 2-4 2z" fill="#fff0c0" stroke="#8a4a10" /></Icon>
      </div>
      <span className="w-[88px] tracking-[-0.15px]">Mon 18:08</span>
      <div className="w-[28px]"><Icon size={16}><path d="M6 1h6v5H6zM0 12h6v5H0zM12 12h6v5h-6z" fill="#2e3436" /><path d="M9 6v3M3 12V9h12v3" stroke="#2e3436" strokeWidth="1.300" /></Icon></div>
      <div className="w-[28px]"><Icon size={16}><path d="M1 6h3l4-4v14l-4-4H1z" fill="#2e3436" /><path d="M10 6c1.500 2 1.500 4 0 6M12.500 4c2.500 3 2.500 7 0 10M15 2c3.500 4 3.500 10 0 14" stroke="#2e3436" strokeWidth="1.600" /></Icon></div>
      <div className="w-[23px]"><Icon size={16}><path d="M5.500 3.500a7 7 0 1 0 7 0M9 1v8" stroke="#2e3436" strokeWidth="2" /></Icon></div>
    </div>
  );
}

function TitleBar() {
  return (
    <div className={`flex h-[37px] items-center border-b border-b-[#868682] bg-gradient-to-b from-[#f4f4f4] via-[#f3f3f3] to-[#e9e9e9] text-[14px] font-semibold text-[#2e3436] ${NOTO}`}>
      <div className="ml-[414px] flex w-[771px] justify-between whitespace-nowrap">
        <span className="tracking-[0.02px]">IC Compiler - LayoutWindow.1 - Block Implementation - placed.CEL;1 [write]</span>
        <span className="tracking-[0.1px]">Lib:cpu_pad.mw [write] - [Layout.1]</span>
      </div>
      <div className="ml-auto flex h-[12px] items-center pr-[13px]">
        <div className="mt-[6px] h-[2px] w-[8px] bg-[#2e3436]" />
        <div className="ml-[27px] h-[6px] w-[6px] border-2 border-[#2e3436]" />
        <svg width="9" height="9" viewBox="0 0 9 9" className="ml-[27px]"><path d="M.5.5l8 8M8.500.5l-8 8" stroke="#2e3436" strokeWidth="2" /></svg>
      </div>
    </div>
  );
}

function StatusBar() {
  const cell = "h-[25px] border border-t-[#707070] border-l-[#707070] border-r-white border-b-white";
  return (
    <div className="mt-[2px] flex h-[26px] shrink-0 items-start gap-[2px]">
      <div className={`w-[1219px] pl-[2px] leading-[23px] ${cell}`}>Click objects or drag a box to select (Hold Ctrl to add, Shift to remove)</div>
      <div className={`w-[174px] pl-[11px] leading-[23px] tracking-[0.05px] ${cell}`}><b className="text-[13px] text-[#444]">XY</b> 195.045, 261.285</div>
      <div className={`w-[174px] pl-[12px] pr-px ${cell}`}><div className={`h-[23px] ${cell} shadow-[inset_1px_1px_0_#444]`} /></div>
      <div className={`flex flex-1 items-center pl-[4px] ${cell}`}><Icon size={16}><path d="M.5 4.500h11v9H.5zM3 4v9M6 4v9M9 4v9M1 7.500h10M1 10.500h10" stroke="#8d8a85" /><path d="M12 3l6 6-6 6z" fill="#8d8a85" /></Icon></div>
    </div>
  );
}

function Task({ w, icon, text, state }: { w: string; icon: React.ReactNode; text: string; state?: string }) {
  const tone =
    state === "active" ? "border-[#b4b4b4] bg-[#cbcbcb] text-[#3a4044]" : state === "dim" ? "border-[#bdbdbd] bg-[#ededed] text-[#a0a0a0]" : "border-[#bdbdbd] bg-[#ededed] text-[#3a4044]";
  return (
    <div className={`flex h-[31px] shrink-0 items-center gap-[4px] rounded-[3px] border pl-[6px] whitespace-nowrap ${tone} ${w}`}>
      <div className="flex w-[24px] justify-center">{icon}</div>
      <span className="tracking-[-0.22px]">{text}</span>
    </div>
  );
}

function TaskBar() {
  return (
    <div className={`flex h-[38px] items-center border-t border-t-[#6e6e6e] bg-gradient-to-b from-[#efefef] to-[#dcdcdc] pl-[5px] text-[13px] ${NOTO}`}>
      <div className="mr-[6px] flex h-[27px] w-[29px] items-center justify-center rounded-[3px] border border-[#bdbdbd] bg-[#efefef]">
        <svg width="14" height="14" viewBox="0 0 14 14" fill="none" stroke="#2e3436" strokeWidth="2"><path d="M7 1h6v5H7zM4 7H1v5h5v-2" /></svg>
      </div>
      <Task w="w-[257px]" state="dim" text="[SELinux Alert Browser]" icon={<Icon size={22}><circle cx="9" cy="9" r="8.500" fill="#b5b3b0" /><path d="M3 9l3-3 3-2h4l-2 3h4v5l-2 1H6l-2-1z" fill="#f0b080" stroke="#fff" /><path d="M7 10h5M9 8h3" stroke="#fff" /></Icon>} />
      <div className="w-[5px] shrink-0" />
      <Task w="w-[259px]" text="System Monitor" icon={<Icon size={22}><path d="M.5.5h17v17H.5z" fill="#c8c8c4" stroke="#888" /><path d="M2 2h14v14H2z" fill="#1f4a10" /><path d="M2.500 10h3l1.500-4 2 7 1.500-5 1.500 3 1-1h2" stroke="#80e030" /></Icon>} />
      <div className="w-[5px] shrink-0" />
      <Task w="w-[258px]" text="b16@eda:~/lab3/icc" icon={<Icon size={22}><path d="M.5.5h17v17H.5z" fill="#c8c8c4" stroke="#888" /><path d="M2 2h14v14H2z" fill="#2c3436" /><path d="M3.500 4l2 1.300-2 1.300M6.500 8h3" stroke="#fff" /></Icon>} />
      <div className="w-[4px] shrink-0" />
      <Task w="w-[259px]" text="IC Compiler - MainWindow.1 - placed" icon={<Icon size={24}><path d="M.5.5h17v17H.5z" fill="#fff" stroke="#901090" /><path d="M2 4h5M2 7l3-3M10 12h6M3 11h8" stroke="#111" strokeWidth="1.300" /><circle cx="7.500" cy="6" r="4.300" stroke="#e01010" strokeWidth="1.600" /><path d="M6 4l4 4M9 3l-2 5" stroke="#000" strokeWidth="1.300" /><path d="M11 9l5 4" stroke="#d01010" strokeWidth="2.500" /><path d="M0 14h18v4H0z" fill="#901090" /><path d="M1 16h16" stroke="#fff" strokeDasharray="1.500 1" /></Icon>} />
      <div className="w-[4px] shrink-0" />
      <Task w="w-[259px]" state="active" text="IC Compiler - LayoutWindow.1 - Bl..." icon={<LayoutLogo size={24} />} />
      <div className="ml-[12px] flex items-center gap-[3px]">
        <div className="h-[25px] w-[54px] border-2 border-[#868686] bg-[#f4f4f2]" />
        <div className="h-[27px] w-[54px] border border-[#cacaca] bg-[#dedede]" />
        <div className="h-[27px] w-[54px] border border-[#cacaca] bg-[#dedede]" />
        <div className="h-[27px] w-[54px] rounded-r-[4px] border border-[#cacaca] bg-[#dedede]" />
      </div>
    </div>
  );
}

export default function App() {
  return (
    <div className={`h-[1200px] w-[1600px] overflow-hidden bg-[#d4d0c8] text-[13.33px] leading-[16px] text-[#111] ${DEJAVU}`}>
      <TopBar />
      <TitleBar />
      <div className="border-b border-b-[#606060]"><MenuBar /></div>
      <div className="border-t border-b border-t-white border-b-[#606060]"><Toolbar /></div>
      <div className="border-t border-b border-t-white border-b-[#606060]"><OptionsBar /></div>
      <div className="flex h-[968px]">
        <SideTools />
        <ObjectPanel />
        <LayoutView />
      </div>
      <StatusBar />
      <TaskBar />
    </div>
  );
}
